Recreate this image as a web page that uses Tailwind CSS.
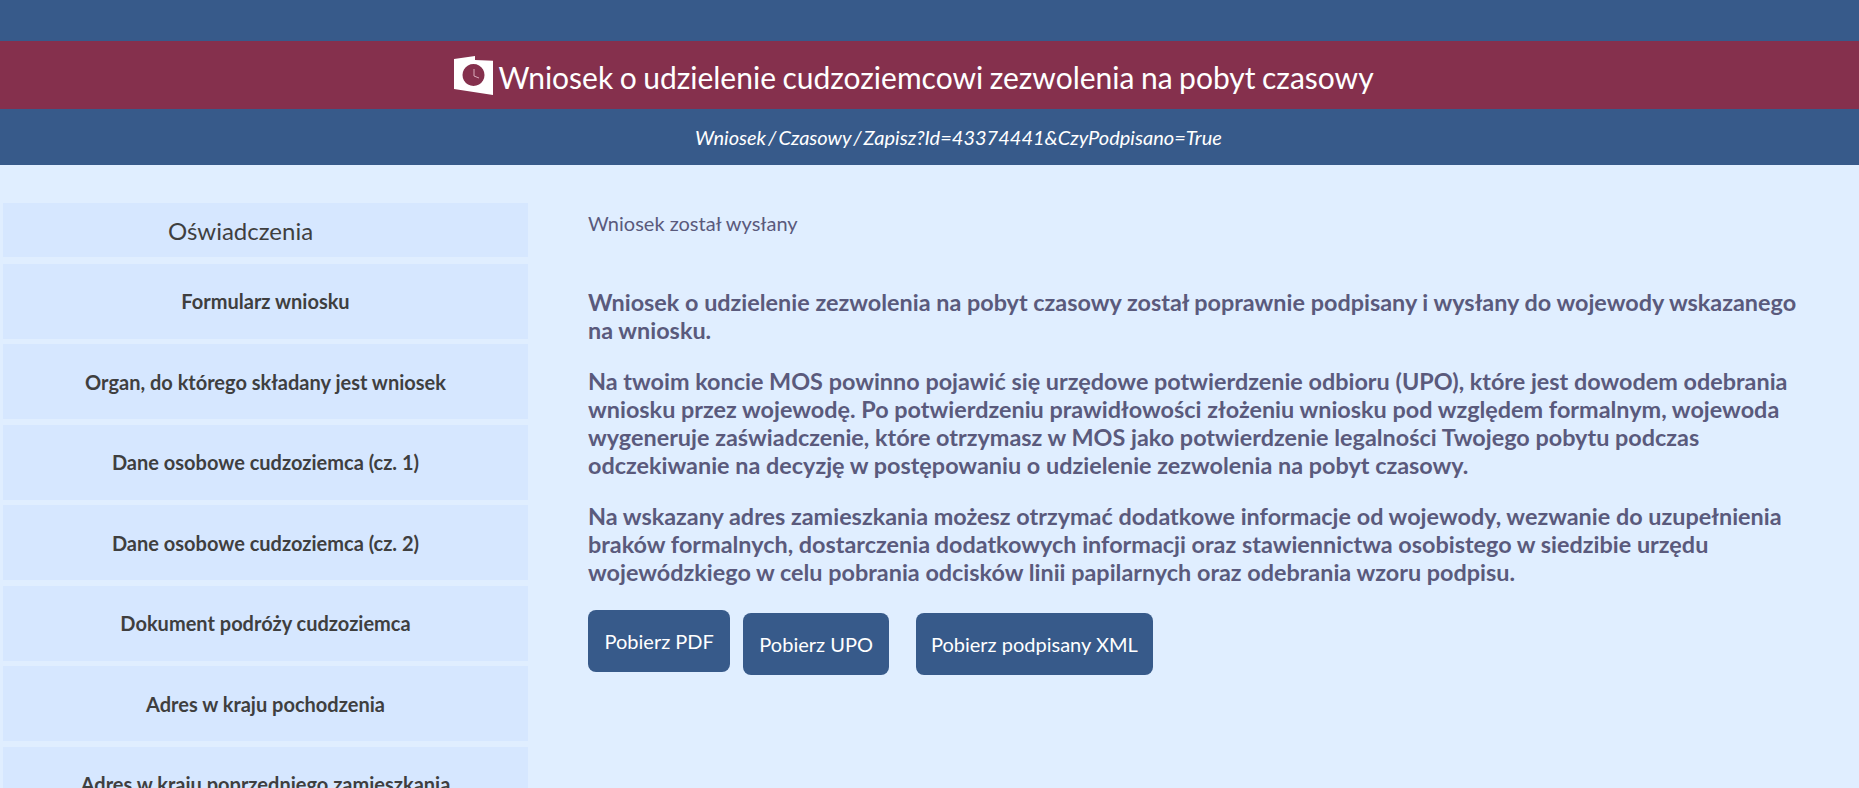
<!DOCTYPE html>
<html lang="pl">
<head>
<meta charset="utf-8">
<title>Wniosek</title>
<script src="https://cdn.jsdelivr.net/npm/@tailwindcss/browser@4"></script>
</head>
<body class="h-[788px] overflow-hidden bg-[#e0eeff] font-['Lato',sans-serif]">
<header class="bg-[#375a8a] text-white">
  <div class="h-[41px]"></div>
  <div class="h-[68px] bg-[#85304d] flex items-center justify-center gap-[5px] pr-[31px]">
    <svg class="w-[39px] h-[39px] mt-[1px]" viewBox="0 0 39 39"><path fill="#fff" fill-rule="evenodd" d="M0 3 L21 0 L21 4 L39 4.7 L39 39 L0 33 Z M19.5 8 a11 11 0 1 0 .01 0 Z"/><path d="M20 13 V20 L25 22" stroke="#d9a9b9" stroke-width="1" fill="none"/></svg>
    <h1 class="text-[30px] leading-[40px] mt-[4px] [word-spacing:-1.2px]">Wniosek o udzielenie cudzoziemcowi zezwolenia na pobyt czasowy</h1>
  </div>
  <div class="h-[56px] flex items-center justify-center italic text-[20px] [word-spacing:-2.7px] pl-[58px]">Wniosek / Czasowy / Zapisz?Id=43374441&amp;CzyPodpisano=True</div>
</header>
<main class="flex pt-[38px]">
  <nav class="w-[525px] ml-[3px] shrink-0 flex flex-col gap-[5.5px] text-[#3f3f3f] text-[20px] font-bold text-center">
    <div class="h-[54px] mb-[1px] bg-[#d6e7ff] flex items-center justify-center font-normal text-[24px] pr-[50px] pt-[1px]">Oświadczenia</div>
    <div class="h-[75px] bg-[#d6e7ff] flex items-center justify-center">Formularz wniosku</div>
    <div class="h-[75px] bg-[#d6e7ff] flex items-center justify-center">Organ, do którego składany jest wniosek</div>
    <div class="h-[75px] bg-[#d6e7ff] flex items-center justify-center">Dane osobowe cudzoziemca (cz. 1)</div>
    <div class="h-[75px] bg-[#d6e7ff] flex items-center justify-center">Dane osobowe cudzoziemca (cz. 2)</div>
    <div class="h-[75px] bg-[#d6e7ff] flex items-center justify-center">Dokument podróży cudzoziemca</div>
    <div class="h-[75px] bg-[#d6e7ff] flex items-center justify-center">Adres w kraju pochodzenia</div>
    <div class="h-[75px] bg-[#d6e7ff] flex items-center justify-center">Adres w kraju poprzedniego zamieszkania</div>
  </nav>
  <section class="ml-[60px] w-[1222px] text-[#5a5a7c]">
    <p class="text-[20px] leading-[26px] mt-[7px]">Wniosek został wysłany</p>
    <div class="mt-[52px] text-[23.4px] leading-[28px] font-bold flex flex-col gap-[23px]">
      <p>Wniosek o udzielenie zezwolenia na pobyt czasowy został poprawnie podpisany i wysłany do wojewody wskazanego na wniosku.</p>
      <p>Na twoim koncie MOS powinno pojawić się urzędowe potwierdzenie odbioru (UPO), które jest dowodem odebrania wniosku przez wojewodę. Po potwierdzeniu prawidłowości złożeniu wniosku pod względem formalnym, wojewoda wygeneruje zaświadczenie, które otrzymasz w MOS jako potwierdzenie legalności Twojego pobytu podczas odczekiwanie na decyzję w postępowaniu o udzielenie zezwolenia na pobyt czasowy.</p>
      <p>Na wskazany adres zamieszkania możesz otrzymać dodatkowe informacje od wojewody, wezwanie do uzupełnienia braków formalnych, dostarczenia dodatkowych informacji oraz stawiennictwa osobistego w siedzibie urzędu wojewódzkiego w celu pobrania odcisków linii papilarnych oraz odebrania wzoru podpisu.</p>
    </div>
    <div class="flex items-start mt-[24px] text-white text-[20px]">
      <a class="h-[62px] px-[16.5px] flex items-center bg-[#375a8a] rounded-lg">Pobierz PDF</a>
      <a class="h-[62px] px-[16px] flex items-center bg-[#375a8a] rounded-lg mt-[3px] ml-[13px]">Pobierz UPO</a>
      <a class="h-[62px] px-[15px] flex items-center bg-[#375a8a] rounded-lg mt-[3px] ml-[27px]">Pobierz podpisany XML</a>
    </div>
  </section>
</main>
</body>
</html>
